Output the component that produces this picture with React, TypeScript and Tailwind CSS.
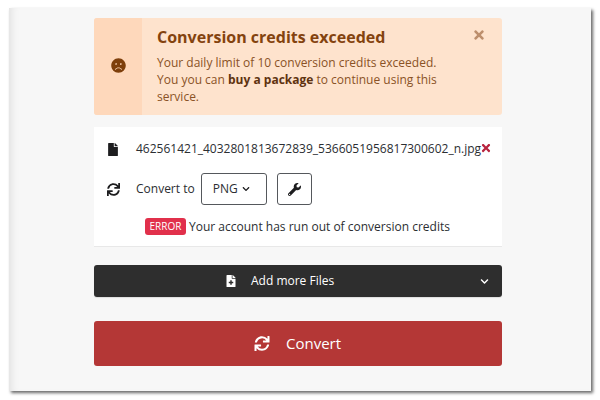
import React from "react";
import { FaFile, FaSync, FaWrench, FaTimes, FaFrown, FaChevronDown, FaFileMedical } from "react-icons/fa";

export default function App() {
  return (
    <div className="w-[600px] h-[400px] bg-white pt-2 pl-[9px] overflow-hidden font-['Open_Sans',sans-serif]">
      <div className="w-[582px] h-[383px] bg-[#f7f7f7] pt-[10px] pl-[85px] shadow-[2px_2px_3px_rgba(0,0,0,0.6),inset_8px_0_8px_-6px_rgba(0,0,0,0.1)]">
        <div className="w-[408px] flex flex-col">
          <div className="h-[97px] flex rounded-[3px] overflow-hidden bg-[#fee3cd]">
            <div className="w-[48px] bg-[#fed8bb] flex items-center justify-center text-[#7e3f0b]">
              <FaFrown className="w-[15px] h-[15px] mt-[-2px]" />
            </div>
            <div className="flex-1 relative pl-[15px] pt-[7px] text-[#8a5226]">
              <div className="text-[16px] leading-[24px] font-bold text-[#84430f]">Conversion credits exceeded</div>
              <div className="text-[12px] leading-[17px] mt-[5px] whitespace-nowrap">
                Your daily limit of 10 conversion credits exceeded.<br />You you can <b className="text-[#5f3310]">buy a package</b> to continue using this<br />service.
              </div>
              <FaTimes className="absolute top-[10px] right-[17px] w-[12px] h-[14px] text-[#bd8f6d]" />
            </div>
          </div>

          <div className="h-[120px] mt-[12px] bg-white border-b border-[#e8e8e8] pt-[12px] text-[#2b2e32] text-[12px]">
            <div className="flex items-center h-[20px] relative">
              <FaFile className="ml-[14px] w-[10px] h-[13px] shrink-0 text-[#1d1d1f]" />
              <span className="ml-[18px] leading-[20px] whitespace-nowrap">462561421_4032801813672839_5366051956817300602_n.jpg</span>
              <FaTimes className="absolute left-[387px] top-[3px] w-[10px] h-[12px] text-[#b8243f]" />
            </div>
            <div className="flex items-center mt-[14px] h-[32px]">
              <FaSync className="ml-[13px] w-[13px] h-[13px] shrink-0 text-[#1d1d1f]" />
              <span className="ml-[16px]">Convert to</span>
              <div className="ml-[6px] w-[66px] h-[32px] border border-[#55585c] rounded-[3px] flex items-center pl-[11px]">
                PNG
                <FaChevronDown className="ml-[4px] w-[8px] h-[8px] text-[#1d1d1f]" />
              </div>
              <div className="ml-[10px] w-[35px] h-[32px] border border-[#55585c] rounded-[3px] flex items-center justify-center">
                <FaWrench className="w-[13px] h-[13px] text-[#1d1d1f]" />
              </div>
            </div>
            <div className="flex items-center mt-[13px] ml-[51px]">
              <span className="w-[41px] h-[17px] bg-[#e1304b] rounded-[3px] text-white text-[10px] leading-[17px] text-center">ERROR</span>
              <span className="ml-[3px] leading-[17px]">Your account has run out of conversion credits</span>
            </div>
          </div>

          <div className="h-[32px] mt-[18px] bg-[#2e2e2e] rounded-[3px] flex items-center relative text-white text-[12px] shadow-[0_1px_1px_rgba(0,0,0,0.1)]">
            <FaFileMedical className="ml-[132px] w-[10px] h-[12px]" />
            <span className="ml-[15px]">Add more Files</span>
            <FaChevronDown className="absolute left-[386px] top-[12px] w-[9px] h-[9px]" />
          </div>

          <div className="h-[45px] mt-[24px] bg-[#b43736] rounded-[3px] flex items-center text-white text-[15px]">
            <FaSync className="ml-[160px] w-[16px] h-[15px]" />
            <span className="ml-[16px]">Convert</span>
          </div>
        </div>
      </div>
    </div>
  );
}
